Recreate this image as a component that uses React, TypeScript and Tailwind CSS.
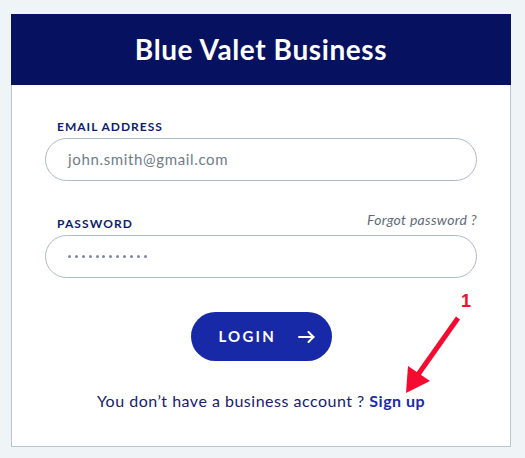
import React from "react";

export default function App() {
  return (
    <div
      className="relative w-full h-[458px] bg-[#eff4f7] pt-[14px] pl-[11px]"
      style={{ fontFamily: "Lato, 'Noto Sans', sans-serif" }}
    >
      <div className="w-[500px]">
        <div className="h-[71px] bg-[#06115f] flex items-center justify-center">
          <h1 className="text-white font-bold text-[28px] leading-none tracking-[0.6px] pb-[1px]">
            Blue Valet Business
          </h1>
        </div>
        <div className="h-[362px] bg-white border-l border-r border-b border-[#b7c5d1] px-[33px] pt-[34px]">
          <div className="pl-3 text-[12px] leading-[16px] font-bold tracking-[1px] text-[#0f1c6b] mb-[3px]">
            EMAIL ADDRESS
          </div>
          <div className="h-[43px] rounded-full border border-[#a9bac8] flex items-center pl-[22px] text-[15px] text-[#6f7c88] tracking-[0.65px]">
            john.smith@gmail.com
          </div>

          <div className="mt-[35px] flex items-start justify-between mb-[3px]">
            <span className="pl-3 text-[12px] leading-[16px] font-bold tracking-[1.1px] text-[#0f1c6b]">
              PASSWORD
            </span>
            <span className="-mt-[4px] text-[14px] leading-[16px] italic text-[#5f6b78] tracking-[0.3px]">
              Forgot password ?
            </span>
          </div>
          <div className="h-[43px] rounded-full border border-[#a9bac8] flex items-center pl-[22px] gap-[3.9px]">
            {Array.from({ length: 12 }).map((_, i) => (
              <span key={i} className="w-[3px] h-[3px] rounded-full bg-[#7d8995]" />
            ))}
          </div>

          <div className="mt-[34px] flex justify-center">
            <button className="h-[49px] w-[141px] rounded-full bg-[#1729a6] flex items-center pl-[28px] text-white">
              <span className="text-[15px] font-bold tracking-[2.2px] leading-none">LOGIN</span>
              <svg className="ml-[22px]" width="17" height="12" viewBox="0 0 17 12" fill="none">
                <path d="M1 6H15.5" stroke="white" strokeWidth="2" strokeLinecap="round" />
                <path d="M10.5 1L15.5 6L10.5 11" stroke="white" strokeWidth="2" strokeLinecap="round" strokeLinejoin="round" />
              </svg>
            </button>
          </div>

          <p className="mt-[30px] text-center text-[16px] leading-[20px] text-[#16216c] tracking-[0.5px]">
            You don’t have a business account ?{" "}
            <span className="font-bold text-[#1a2aa6]">Sign up</span>
          </p>
        </div>
      </div>

      <span
        className="absolute left-[461px] top-[291px] text-[18px] font-bold text-[#f50a30] leading-[20px]"
        style={{ fontFamily: "'Liberation Sans', Arial, sans-serif" }}
      >
        1
      </span>
      <svg className="absolute left-0 top-0 pointer-events-none" width="525" height="458">
        <path d="M458 318 L417 376" stroke="#f50a30" strokeWidth="5" strokeLinecap="butt" />
        <path d="M406 393 L408 366 L430 381 Z" fill="#f50a30" />
      </svg>
    </div>
  );
}
